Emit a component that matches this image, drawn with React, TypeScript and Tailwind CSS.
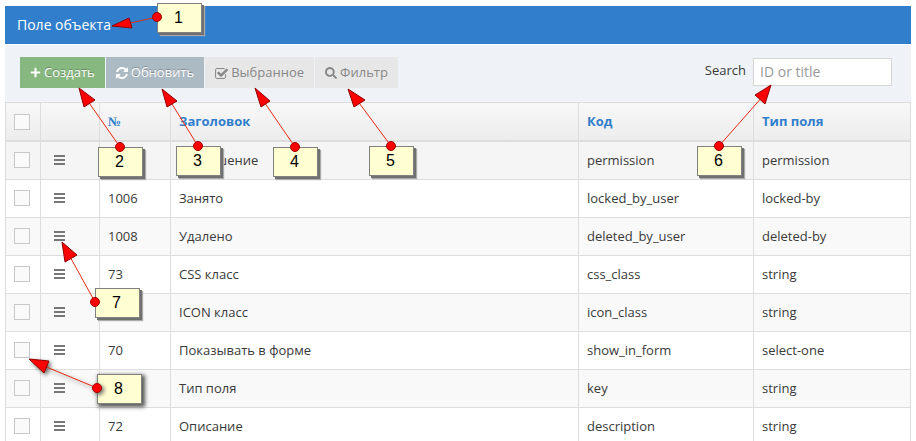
import React from "react";
import { FaPlus, FaSearch } from "react-icons/fa";

type Row = { id: string; title: string; code: string; type: string };

const rows: Row[] = [
  { id: "1005", title: "Разрешение", code: "permission", type: "permission" },
  { id: "1006", title: "Занято", code: "locked_by_user", type: "locked-by" },
  { id: "1008", title: "Удалено", code: "deleted_by_user", type: "deleted-by" },
  { id: "73", title: "CSS класс", code: "css_class", type: "string" },
  { id: "74", title: "ICON класс", code: "icon_class", type: "string" },
  { id: "70", title: "Показывать в форме", code: "show_in_form", type: "select-one" },
  { id: "71", title: "Тип поля", code: "key", type: "string" },
  { id: "72", title: "Описание", code: "description", type: "string" },
];

type Note = { n: number; x: number; y: number; dot: [number, number]; head: [number, number][] };

const notes: Note[] = [
  { n: 1, x: 157, y: 3, dot: [157, 17], head: [[112, 26], [129, 18], [132, 28]] },
  { n: 2, x: 98, y: 147, dot: [120, 147], head: [[79, 88], [95, 100], [84, 107]] },
  { n: 3, x: 176, y: 146, dot: [198, 146], head: [[162, 89], [177, 101], [167, 107]] },
  { n: 4, x: 273, y: 147, dot: [295, 147], head: [[255, 88], [270, 101], [261, 107]] },
  { n: 5, x: 369, y: 146, dot: [391, 146], head: [[348, 89], [365, 100], [354, 107]] },
  { n: 6, x: 697, y: 146, dot: [719, 146], head: [[771, 85], [765, 104], [755, 95]] },
  { n: 7, x: 95, y: 288, dot: [95, 302], head: [[62, 242], [77, 255], [65, 262]] },
  { n: 8, x: 97, y: 374, dot: [97, 388], head: [[29, 359], [49, 361], [44, 373]] },
];

function RefreshIcon() {
  return (
    <svg width="12" height="12" viewBox="0 0 1536 1536" fill="currentColor" aria-hidden="true">
      <path d="M1511 928q0 5-1 7-64 268-268 434.500T764 1536q-146 0-282.500-55T238 1324l-129 129q-19 19-45 19t-45-19-19-45V960q0-26 19-45t45-19h448q26 0 45 19t19 45-19 45l-137 137q71 66 161 102t187 36q134 0 250-65t186-179q11-17 53-117 8-23 30-23h192q13 0 22.500 9.500t9.500 22.500zm25-800v448q0 26-19 45t-45 19h-448q-26 0-45-19t-19-45 19-45l138-138Q969 256 768 256q-134 0-250 65T332 500q-11 17-53 117-8 23-30 23H50q-13 0-22.500-9.500T18 608v-7q65-268 270-434.500T768 0q146 0 284 55.500T1297 212l130-129q19-19 45-19t45 19 19 45z" />
    </svg>
  );
}

function CheckSquareIcon() {
  return (
    <svg width="13" height="12" viewBox="0 0 1650 1536" fill="currentColor" aria-hidden="true">
      <path d="M1408 930v318q0 119-84.500 203.500T1120 1536H288q-119 0-203.500-84.500T0 1248V416q0-119 84.500-203.500T288 128h832q63 0 117 25 15 7 18 23 3 17-9 29l-49 49q-10 10-23 10-3 0-9-2-23-6-45-6H288q-66 0-113 47t-47 113v832q0 66 47 113t113 47h832q66 0 113-47t47-113V994q0-13 9-22l64-64q10-10 23-10 6 0 12 3 20 8 20 29zm231-489l-814 814q-24 24-57 24t-57-24l-430-430q-24-24-24-57t24-57l110-110q24-24 57-24t57 24l263 263 647-647q24-24 57-24t57 24l110 110q24 24 24 57t-24 57z" />
    </svg>
  );
}

function MenuBars() {
  return (
    <button type="button" aria-label="Меню строки" className="flex h-[10px] w-[11px] flex-col justify-between">
      <span className="h-[2px] w-full bg-[#777]" />
      <span className="h-[2px] w-full bg-[#777]" />
      <span className="h-[2px] w-full bg-[#777]" />
    </button>
  );
}

function Tick({ label }: { label: string }) {
  return (
    <input
      type="checkbox"
      aria-label={label}
      className="block size-4 appearance-none border border-[#c8c8c8] bg-[#fafafa] checked:bg-[#307ecc]"
    />
  );
}

const btn = "flex h-[31px] items-center gap-[3px] px-[10px] text-[13px]";
const cell = "border-r border-b border-[#ddd] px-2";
const iconCell = "border-r border-b border-[#ddd] pb-px";
const head = "border-t border-r border-b-2 border-[#ddd] px-2 pt-px text-left font-bold text-[#307ecc]";

function Annotations() {
  return (
    <div className="pointer-events-none absolute inset-0">
      {notes.map((k) => (
        <div
          key={k.n}
          className={
            "absolute flex h-[30px] w-[45px] items-center justify-center border border-[#808080] bg-[#ffffd2] pr-[2px] font-['Liberation_Sans',Arial,sans-serif] text-base text-black " +
            (k.n === 8 ? "shadow-[2px_2px_4px_1px_#555]" : "shadow-[2px_2px_0_#707070,3px_3px_1px_#aaa]")
          }
          style={{ left: k.x, top: k.y }}
        >
          {k.n}
        </div>
      ))}
      <svg className="absolute inset-0 size-full" aria-hidden="true">
        {notes.map((k) => {
          const mx = (k.head[1][0] + k.head[2][0]) / 2;
          const my = (k.head[1][1] + k.head[2][1]) / 2;
          return (
            <g key={k.n} className={k.n === 8 ? "drop-shadow-[2px_2px_2px_#666]" : ""}>
              <line x1={k.dot[0]} y1={k.dot[1]} x2={mx} y2={my} stroke="#e62a10" strokeWidth="1" />
              <polygon points={k.head.map((p) => p.join(",")).join(" ")} fill="#ff0000" stroke="#900000" strokeWidth="1" />
              <circle cx={k.dot[0]} cy={k.dot[1]} r="4.5" fill="#ff0000" stroke="#a00000" strokeWidth="1" />
            </g>
          );
        })}
      </svg>
    </div>
  );
}

export default function App() {
  return (
    <main className="relative h-screen overflow-hidden bg-white px-[5px] pt-[6px] font-['Open_Sans','Noto_Sans',sans-serif] text-[13px] text-[#393939]">
      <h1 className="mb-px h-[38px] bg-[#307ecc] pl-3 text-sm leading-[38px] text-white">Поле объекта</h1>
      <div className="flex items-start justify-between bg-[#eff3f8] pt-3 pr-[19px] pb-[14px] pl-[15px]">
        <div className="flex gap-px">
          <button type="button" className={btn + " bg-[#87b87f] text-white [text-shadow:0_-1px_0_rgba(0,0,0,0.25)]"}>
            <FaPlus size={11} />
            Создать
          </button>
          <button type="button" className={btn + " bg-[#abbac3] text-white [text-shadow:0_-1px_0_rgba(0,0,0,0.25)]"}>
            <RefreshIcon />
            Обновить
          </button>
          <button type="button" className={btn + " bg-[#e7e7e7] text-[#888]"}>
            <CheckSquareIcon />
            Выбранное
          </button>
          <button type="button" className={btn + " bg-[#e7e7e7] text-[#888]"}>
            <FaSearch size={12} />
            Фильтр
          </button>
        </div>
        <div className="flex items-start gap-[7px] pt-px">
          <label htmlFor="search" className="leading-6">
            Search
          </label>
          <input
            id="search"
            type="text"
            placeholder="ID or title"
            className="h-7 w-[139px] border border-[#d5d5d5] bg-white px-[6px] pb-[2px] text-sm placeholder:text-[#999]"
          />
        </div>
      </div>
      <table className="w-full table-fixed border-separate border-spacing-0 border-l border-[#ddd]">
        <colgroup>
          <col className="w-[35px]" />
          <col className="w-[59px]" />
          <col className="w-[71px]" />
          <col />
          <col className="w-[175px]" />
          <col className="w-[157px]" />
        </colgroup>
        <thead>
          <tr className="h-10 bg-linear-to-b from-[#f8f8f8] to-[#ececec]">
            <th className={head}>
              <Tick label="Выбрать все" />
            </th>
            <th className={head} aria-label="Меню" />
            <th className={head + " font-['Liberation_Serif',serif]"}>№</th>
            <th className={head}>Заголовок</th>
            <th className={head}>Код</th>
            <th className={head}>Тип поля</th>
          </tr>
        </thead>
        <tbody>
          {rows.map((r, i) => (
            <tr key={r.id} className={"h-[38px] " + (i === 0 ? "bg-[#f5f5f5]" : i % 2 === 0 ? "bg-[#f9f9f9]" : "bg-white")}>
              <td className={iconCell + " pl-2"}>
                <Tick label={r.title} />
              </td>
              <td className={iconCell + " pl-[13px]"}>
                <MenuBars />
              </td>
              <td className={cell}>{r.id}</td>
              <td className={cell}>{r.title}</td>
              <td className={cell}>{r.code}</td>
              <td className={cell}>{r.type}</td>
            </tr>
          ))}
        </tbody>
      </table>
      <Annotations />
    </main>
  );
}
